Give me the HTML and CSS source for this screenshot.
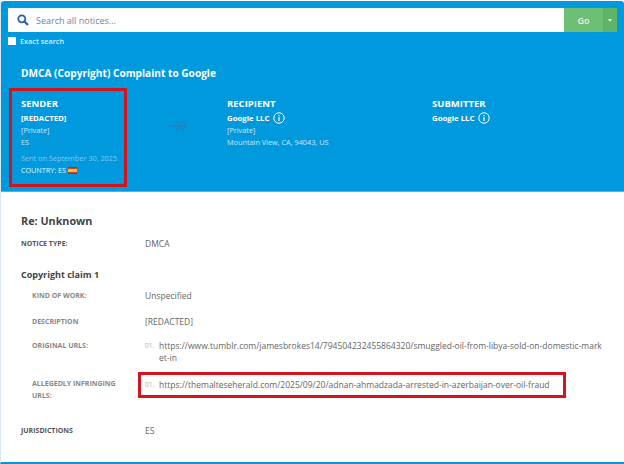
FILE: index.html
```html
<!DOCTYPE html>
<html lang="en">

<head>
    <meta charset="UTF-8">
    <meta name="viewport" content="width=device-width, initial-scale=1.0">
    <title>DMCA (Copyright) Complaint to Google</title>
    <link rel="stylesheet" href="styles.css">
</head>

<body>
    <div class="page">
        <div class="hero">
            <div class="search">
                <div class="search-box">
                    <svg class="search-icon" width="12" height="12" viewBox="0 0 12 12">
                        <circle cx="4.8" cy="4.8" r="3.5" fill="none" stroke="#2b5fa8" stroke-width="1.8" />
                        <path d="M7.5 7.5L11 11" stroke="#2b5fa8" stroke-width="2.2" />
                    </svg>
                    <span class="search-text">Search all notices...</span>
                </div>
                <div class="go">Go</div>
                <div class="go-menu"><span class="caret"></span></div>
            </div>
            <label class="exact"><span class="check"></span>Exact search</label>

            <h1 class="title">DMCA (Copyright) Complaint to Google</h1>

            <div class="parties">
                <div class="party sender">
                    <h2>SENDER</h2>
                    <div class="name">[REDACTED]</div>
                    <div class="line">[Private]</div>
                    <div class="line">ES</div>
                    <div class="sent">Sent on September 30, 2025</div>
                    <div class="country">COUNTRY: ES
                        <svg class="flag" width="9" height="7" viewBox="0 0 9 7">
                            <rect width="9" height="7" fill="#c8202a" />
                            <rect y="1.8" width="9" height="3.4" fill="#f6c33b" />
                        </svg>
                    </div>
                </div>
                <div class="arrow">
                    <svg width="18" height="12" viewBox="0 0 18 12" fill="none" stroke="#1a84bf" stroke-width="1.5">
                        <path d="M0 6H15" />
                        <path d="M6 1l5 5-5 5" />
                        <path d="M11 1l5 5-5 5" />
                    </svg>
                </div>
                <div class="party recipient">
                    <h2>RECIPIENT</h2>
                    <div class="name">Google LLC
                        <svg class="info" width="12" height="12" viewBox="0 0 12 12">
                            <circle cx="6" cy="6" r="5.2" fill="none" stroke="#fff" />
                            <rect x="5.4" y="5" width="1.2" height="4" fill="#fff" />
                            <rect x="5.4" y="3" width="1.2" height="1.2" fill="#fff" />
                        </svg>
                    </div>
                    <div class="line">[Private]</div>
                    <div class="line">Mountain View, CA, 94043, US</div>
                </div>
                <div class="party submitter">
                    <h2>SUBMITTER</h2>
                    <div class="name">Google LLC
                        <svg class="info" width="12" height="12" viewBox="0 0 12 12">
                            <circle cx="6" cy="6" r="5.2" fill="none" stroke="#fff" />
                            <rect x="5.4" y="5" width="1.2" height="4" fill="#fff" />
                            <rect x="5.4" y="3" width="1.2" height="1.2" fill="#fff" />
                        </svg>
                    </div>
                </div>
            </div>
        </div>

        <div class="body">
            <h2 class="re">Re: Unknown</h2>
            <div class="row top-row">
                <div class="key dark">NOTICE TYPE:</div>
                <div class="val">DMCA</div>
            </div>

            <h3 class="claim">Copyright claim 1</h3>
            <div class="row sub kind">
                <div class="key">KIND OF WORK:</div>
                <div class="val">Unspecified</div>
            </div>
            <div class="row sub desc">
                <div class="key">DESCRIPTION</div>
                <div class="val">[REDACTED]</div>
            </div>
            <div class="row sub orig">
                <div class="key">ORIGINAL URLS:</div>
                <div class="val url"><span class="num">01.</span><span class="link">https://www.tumblr.com/jamesbrokes14/794504232455864320/smuggled-oil-from-libya-sold-on-domestic-mark<br>et-in</span></div>
            </div>
            <div class="row sub infringing">
                <div class="key">ALLEGEDLY INFRINGING URLS:</div>
                <div class="val url boxed"><span class="num">01.</span><span class="link">https://themalteseherald.com/2025/09/20/adnan-ahmadzada-arrested-in-azerbaijan-over-oil-fraud</span></div>
            </div>
            <div class="row juris">
                <div class="key dark">JURISDICTIONS</div>
                <div class="val">ES</div>
            </div>
        </div>
    </div>
</body>

</html>
```

FILE: styles.css
```css
* {
    box-sizing: border-box;
}

body {
    margin: 0;
    font-family: "Open Sans", sans-serif;
    background-color: #fff;
    color: #666;
    overflow: hidden;
}

.page {
    width: 624px;
    height: 464px;
    padding-top: 1px;
    border-left: 1px solid #d5e8f3;
    border-bottom: 2px solid #0099dd;
}

.hero {
    height: 191px;
    background-color: #0099dd;
    border-radius: 3px 3px 0 0;
    padding: 7px 7px 0 7px;
    color: #fff;
    border-bottom: 1px solid #4db4e6;
}

.search {
    display: flex;
    height: 24px;
}

.search-box {
    flex: 1;
    background-color: #fff;
    display: flex;
    align-items: center;
    padding-left: 9px;
}

.search-icon {
    margin-right: 7px;
}

.search-text {
    font-size: 9px;
    color: #6f7fae;
}

.go {
    width: 39px;
    background-color: #6cbf73;
    font-size: 9px;
    font-weight: 600;
    display: flex;
    align-items: center;
    justify-content: center;
    color: #e6f4e6;
}

.go-menu {
    width: 14px;
    background-color: #5fb567;
    display: flex;
    align-items: center;
    justify-content: center;
}

.caret {
    border-left: 2.5px solid transparent;
    border-right: 2.5px solid transparent;
    border-top: 3px solid #e6f4e6;
}

.exact {
    display: flex;
    align-items: center;
    font-size: 7.3px;
    font-weight: 600;
    color: #d7eefa;
    margin-top: 5px;
    height: 8px;
}

.check {
    width: 8px;
    height: 8px;
    background-color: #fff;
    margin-right: 4px;
}

.title {
    margin: 21px 0 0 13px;
    font-size: 10.15px;
    line-height: 14px;
    font-weight: 700;
}

.parties {
    display: flex;
    margin-top: 8px;
}

.party h2 {
    margin: 0;
    font-size: 9.5px;
    line-height: 14px;
    font-weight: 700;
}

.name {
    font-size: 7.8px;
    font-weight: 700;
    line-height: 12px;
    margin-top: 1px;
    display: flex;
    align-items: center;
    gap: 3px;
}

.line {
    font-size: 7.3px;
    line-height: 12px;
    color: #cdeafa;
}

.sender {
    width: 118px;
    height: 99px;
    margin-left: 1px;
    border: 3px solid #d2141f;
    padding: 6px 0 0 9px;
}

.sent {
    font-size: 7.3px;
    line-height: 12px;
    color: #7ccbf0;
    margin-top: 4px;
}

.country {
    font-size: 7.2px;
    line-height: 12px;
    color: #e8f6fd;
}

.flag {
    vertical-align: -1px;
}

.arrow {
    width: 100px;
    padding: 27px 0 0 43px;
}

.recipient {
    width: 205px;
    padding-top: 9px;
}

.submitter {
    padding-top: 9px;
}

.body {
    padding: 22px 0 0 20px;
}

.re {
    margin: 0;
    font-size: 10.8px;
    line-height: 14px;
    font-weight: 700;
    color: #444;
}

.row {
    display: flex;
}

.key {
    font-size: 7px;
    font-weight: 700;
    color: #888;
    width: 124px;
    line-height: 12px;
    flex-shrink: 0;
}

.key.dark {
    color: #555;
}

.val {
    font-size: 8.5px;
    line-height: 12px;
    color: #666;
}

.top-row {
    margin-top: 10px;
}

.claim {
    margin: 19px 0 0;
    font-size: 9px;
    line-height: 12px;
    font-weight: 700;
    color: #444;
}

.sub {
    padding-left: 11px;
}

.sub .key {
    width: 113px;
}

.kind {
    margin-top: 9px;
}

.desc {
    margin-top: 14px;
}

.orig {
    margin-top: 12px;
}

.infringing {
    margin-top: 14px;
}

.infringing .key {
    width: 95px;
    margin-right: 18px;
}

.url {
    display: flex;
}

.num {
    font-size: 6.5px;
    color: #aaa;
    width: 14px;
    flex-shrink: 0;
}

.boxed {
    width: 428px;
    height: 26px;
    margin: -6px 0 0 -7px;
    border: 3px solid #d2141f;
    padding: 4px 0 0 4px;
}

.juris {
    margin-top: 23px;
}
```
